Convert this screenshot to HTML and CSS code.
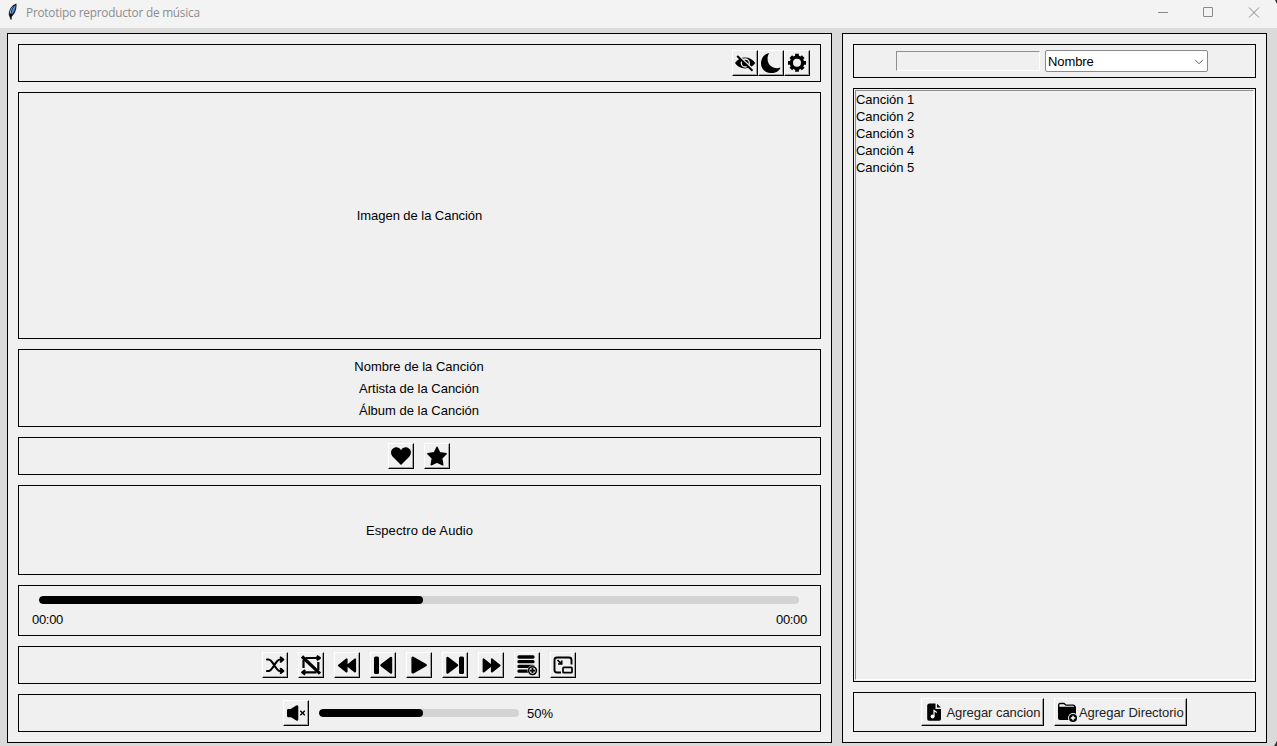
FILE: index.html
```html
<!DOCTYPE html>
<html lang="es">
<head>
<meta charset="utf-8">
<title>Prototipo reproductor de música</title>
<link rel="stylesheet" href="styles.css">
</head>
<body>
<div class="window">
  <header class="titlebar">
    <svg class="feather" width="12" height="18" viewBox="0 0 12 18"><path d="M9.400.6C5 2 1.800 6.200 1.700 11.500L3 15C7 12.500 10.200 7 9.400.6Z" fill="#101820"/><path d="M8.500 2C6 4 4.500 8 4.200 12C7.200 9 8.700 5.500 8.500 2Z" fill="#4b91e2"/><path d="M7 2.600C4 5 2.700 8 2.700 11L3.500 11.500C3.800 8 5 5.200 7 2.600Z" fill="#a9cdf0"/><path d="M3.800 10.500L4 16.500" stroke="#000" stroke-width="1.400"/></svg>
    <span class="caption">Prototipo reproductor de música</span>
    <svg class="controls" width="110" height="28" viewBox="0 0 110 28" fill="none" stroke="#8a8a8a"><path d="M3 12.500h10"/><rect x="48.500" y="7.500" width="9" height="9" rx=".5"/><path d="M94 7.500l10 10M104 7.500l-10 10"/></svg>
  </header>
  <main class="content">
    <section class="panel player">
      <div class="box toolbar">
        <button class="btn"><svg width="24" height="24" viewBox="0 0 24 24"><path d="M2 12C6 4.500 18 4.500 22.300 12C18 19.200 6 19.200 2 12Z"/><circle cx="12.300" cy="12" r="4" fill="none" stroke="#efefef" stroke-width="1.300"/><path d="M5 4L20.500 18.500" stroke="#efefef" stroke-width="1.600"/><path d="M4.200 5L19.500 19.800" stroke="#000" stroke-width="1.900"/></svg></button>
        <button class="btn"><svg width="24" height="24" viewBox="0 0 24 24"><path d="M10.300 2C5 3 2 7.300 2 12.200C2 18.200 6.600 22 12.200 22C16.800 22 20.200 20 21.600 16.400C16.500 18.300 11.800 16.500 9.700 12.600C7.900 9.200 8.300 5 10.300 2Z"/></svg></button>
        <button class="btn"><svg width="24" height="24" viewBox="0 0 24 24"><g transform="translate(12 11.800)"><g stroke="#000" stroke-width="3.800"><path d="M0-9V9M-9 0H9M-6.200-6.200L6.200 6.200M6.200-6.200L-6.200 6.200"/></g><circle r="7.300"/><circle r="4" fill="#efefef"/></g></svg></button>
      </div>
      <div class="box artwork">Imagen de la Canción</div>
      <div class="box details"><div>Nombre de la Canción</div><div>Artista de la Canción</div><div>Álbum de la Canción</div></div>
      <div class="box row">
        <button class="btn"><svg width="24" height="24" viewBox="0 0 24 24"><path d="M12 21L4 13C.8 9.600 1.800 5 5.300 3.700C8 2.800 10.500 3.800 12 6.200C13.500 3.800 16 2.800 18.700 3.700C22.200 5 23.200 9.600 20 13Z"/></svg></button>
        <button class="btn"><svg width="24" height="24" viewBox="0 0 24 24"><path d="M12 3.200L14.700 8.700L21.200 9.700L16.700 14.300L17.800 20.800L12 18L6.200 20.800L7.300 14.300L2.800 9.700L9.300 8.700Z" stroke="#000" stroke-width="1.400" stroke-linejoin="round"/></svg></button>
      </div>
      <div class="box spectrum">Espectro de Audio</div>
      <div class="box progress">
        <div class="track"><div class="fill song-fill"></div></div>
        <div class="times"><span>00:00</span><span>00:00</span></div>
      </div>
      <div class="box row">
        <button class="btn"><svg width="24" height="24" viewBox="0 0 24 24"><g fill="none" stroke="#000" stroke-width="2.200" stroke-linecap="round" stroke-linejoin="round"><path d="M4 6.500H5.500C10 6.500 12.500 18 17 18H19.500M4 18H5.500C10 18 12.500 6.500 17 6.500H19.500M17.800 4.500l2.500 2L17.800 8.700M17.800 15.800l2.500 2.200L17.800 20"/></g></svg></button>
        <button class="btn"><svg width="24" height="24" viewBox="0 0 24 24"><g fill="none" stroke="#000" stroke-width="2.200" stroke-linejoin="round"><path d="M6.500 5H20M4.500 7V15M5 19.300H17.500M19.300 17V9M17.800 2.800L20.800 5L17.800 7.200M6.200 17L3.200 19.300L6.200 21.500"/><path d="M3 3.500L21 20.700" stroke-width="3.200"/></g></svg></button>
        <button class="btn"><svg width="24" height="24" viewBox="0 0 24 24"><path d="M11.500 6.500V18.500L4 12.500ZM20 6.500V18.500L12.500 12.500Z" stroke="#000" stroke-width="2.200" stroke-linejoin="round"/></svg></button>
        <button class="btn"><svg width="24" height="24" viewBox="0 0 24 24"><rect x="3" y="3.500" width="5" height="17.500" rx="1.500"/><path d="M20 5V19.500L10.500 12.300Z" stroke="#000" stroke-width="2.400" stroke-linejoin="round"/></svg></button>
        <button class="btn"><svg width="24" height="24" viewBox="0 0 24 24"><path d="M5.800 5V19.200L18.500 12.100Z" stroke="#000" stroke-width="2.800" stroke-linejoin="round"/></svg></button>
        <button class="btn"><svg width="24" height="24" viewBox="0 0 24 24"><rect x="16" y="3.500" width="5" height="17.500" rx="1.500"/><path d="M4.500 5V19.500L14 12.300Z" stroke="#000" stroke-width="2.400" stroke-linejoin="round"/></svg></button>
        <button class="btn"><svg width="24" height="24" viewBox="0 0 24 24"><path d="M4.700 6.500V18.500L12 12.500ZM13 6.500V18.500L20.500 12.500Z" stroke="#000" stroke-width="2.200" stroke-linejoin="round"/></svg></button>
        <button class="btn"><svg width="24" height="24" viewBox="0 0 24 24"><path d="M4 4H18M4 8.700H18M4 13.400H18M4 18.200H13" stroke="#000" stroke-width="3.300" stroke-linecap="round"/><circle cx="17.500" cy="17.600" r="5" fill="#efefef"/><circle cx="17.500" cy="17.600" r="3.900" fill="#efefef" stroke="#000" stroke-width="1.600"/><path d="M15 17.600h5M17.500 15.100v5" stroke="#000" stroke-width="1.800"/></svg></button>
        <button class="btn"><svg width="24" height="24" viewBox="0 0 24 24" fill="none" stroke="#000"><path d="M10 19.500H6Q3.500 19.500 3.500 17V7Q3.500 4.500 6 4.500H18Q20.500 4.500 20.500 7V11.500" stroke-width="1.900"/><rect x="12" y="14.300" width="9" height="5.400" rx=".8" stroke-width="1.700"/><path d="M6.500 7L10.300 10.700M10.700 7.500V11H7" stroke-width="1.700"/></svg></button>
      </div>
      <div class="box volume">
        <button class="btn"><svg width="24" height="24" viewBox="0 0 24 24"><path d="M4.300 9.200H7.300L13 5.500V18.500L7.300 15H4.300Z" stroke="#000" stroke-width="2.600" stroke-linejoin="round"/><path d="M16.300 9.800L20.800 14.300M20.800 9.800L16.300 14.300" stroke="#000" stroke-width="1.400"/></svg></button>
        <div class="track volume-track"><div class="fill volume-fill"></div></div>
        <span>50%</span>
      </div>
    </section>
    <section class="panel library">
      <div class="box search">
        <div class="entry"></div>
        <div class="combo"><span>Nombre</span><svg width="10" height="6" viewBox="0 0 10 6"><path d="M1 .8L5 4.800L9 .8" fill="none" stroke="#666"/></svg></div>
      </div>
      <div class="box listbox"><ul class="songs"><li>Canción 1</li><li>Canción 2</li><li>Canción 3</li><li>Canción 4</li><li>Canción 5</li></ul></div>
      <div class="box add">
        <button class="btn text-btn add-song"><svg width="24" height="24" viewBox="0 0 24 24"><path d="M7.500 3.500H13.500V9H19V19Q19 20.800 17.200 20.800H7Q5.200 20.800 5.200 19V5.500Q5.200 3.500 7.500 3.500ZM15 3.800L18.800 7.600H15Z"/><circle cx="10.500" cy="16.500" r="1.900" fill="#fff"/><path d="M12 16.800V10.500L14.800 12.500" stroke="#fff" stroke-width="1.200" fill="none"/></svg><span>Agregar cancion</span></button>
        <button class="btn text-btn add-folder"><svg width="24" height="24" viewBox="0 0 24 24"><path d="M3.700 8V5Q3.700 3.500 5 3.500H9L11 5.200H18Q20 5.200 20 7.500" fill="none" stroke="#000" stroke-width="1.300"/><path d="M3 6.800H21V19Q21 20 20 20H5Q3 20 3 18Z"/><circle cx="18" cy="18" r="5" fill="#efefef"/><circle cx="18" cy="18" r="4"/><path d="M15.700 18h4.600M18 15.700v4.600" stroke="#fff" stroke-width="1.400"/></svg><span>Agregar Directorio</span></button>
      </div>
    </section>
  </main>
  <svg class="corner top" width="2" height="4"><path d="M0 0H2V4Z" fill="#333"/></svg>
  <svg class="corner bottom" width="3" height="5"><path d="M3 0V5H0Z" fill="#333"/></svg>
</div>
</body>
</html>
```
FILE: styles.css
```css
* { box-sizing: border-box; }
body { margin: 0; font: 13px/17px "Liberation Sans", Arial, sans-serif; color: #000; }
.window { position: relative; width: 1277px; height: 746px; display: flex; flex-direction: column; background: #dadada; overflow: hidden; }
.titlebar { height: 28px; flex: none; display: flex; background: #f3f3f3; }
.feather { margin: 3px 0 0 7px; }
.caption { margin-left: 7px; font: 11.8px/25px "Open Sans", sans-serif; letter-spacing: -.22px; color: #8d8d8d; flex: 1; white-space: nowrap; }
.controls { margin-right: 12px; }
.content { flex: 1; display: flex; gap: 10px; padding: 5px 10px 3px 7px; }
.panel { display: flex; flex-direction: column; gap: 10px; padding: 10px; border: 1px solid #000; background: #f0f0f0; }
.player { width: 825px; }
.library { width: 425px; }
.box { border: 1px solid #000; flex: none; }
.toolbar, .row, .volume { height: 38px; display: flex; align-items: center; justify-content: center; }
.toolbar { justify-content: flex-end; padding-right: 10px; }
.row { gap: 10px; padding-right: 1px; }
.btn { width: 26px; height: 26px; padding: 0; margin: 0; flex: none; display: flex; align-items: center; justify-content: center; border: 1px solid; border-color: #fff #000 #000 #fff; background: #f0f0f0; box-shadow: inset -1px -1px #a0a0a0; border-radius: 0; font: inherit; color: #222; white-space: nowrap; }
.btn svg { flex: none; }
.artwork, .spectrum { display: flex; align-items: center; justify-content: center; }
.artwork { height: 247px; letter-spacing: -.05px; }
.spectrum { height: 90px; letter-spacing: .1px; }
.details { height: 78px; padding: 6px 1px 0 0; text-align: center; line-height: 22px; }
.progress { height: 51px; padding: 10px 13px 0; }
.track { height: 8px; border-radius: 4px; background: #d3d3d3; overflow: hidden; }
.progress .track { width: 760px; margin-left: 7px; }
.fill { height: 8px; border-radius: 4px; background: #000; }
.song-fill { width: 384px; }
.volume-fill { width: 104px; }
.times { display: flex; justify-content: space-between; margin-top: 7px; letter-spacing: -.3px; }
.volume { justify-content: flex-start; padding-left: 264px; }
.volume-track { width: 200px; margin: 0 8px 0 10px; }
.search { height: 34px; display: flex; align-items: center; padding-left: 42px; gap: 5px; }
.entry { width: 144px; height: 20px; border: 1px solid; border-color: #8f8f8f #fff #fff #8f8f8f; }
.combo { width: 163px; height: 22px; display: flex; align-items: center; justify-content: space-between; padding: 1px 3px 0 2px; border: 1px solid #8a8a8a; border-radius: 2px; background: #fff; letter-spacing: -.1px; }
.listbox { height: 594px; padding: 1px; }
.songs { height: 100%; margin: 0; padding: 0; list-style: none; border: 1px solid; border-color: #8f8f8f #fff #fff #8f8f8f; letter-spacing: -.05px; }
.add { height: 40px; display: flex; align-items: center; justify-content: center; gap: 10px; padding-right: 1px; }
.text-btn { height: 28px; justify-content: flex-start; letter-spacing: -.05px; }
.add-song { width: 123px; }
.add-folder { width: 133px; }
.add-song svg { margin: 0 .5px 0 0; }
.corner { position: absolute; right: 0; }
.top { top: 0; }
.bottom { bottom: 0; }
```
